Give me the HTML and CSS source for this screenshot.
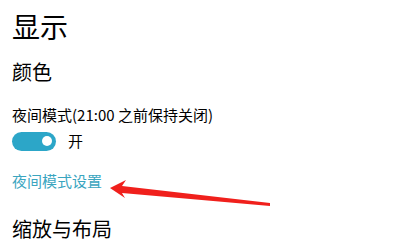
FILE: index.html
```html
<!DOCTYPE html>
<html lang="zh-CN">
<head>
    <meta charset="UTF-8">
    <title>显示</title>
    <link rel="stylesheet" href="styles.css">
</head>
<body>
    <div class="page">
        <h1 class="page-title">显示</h1>
        <h2 class="section-title">颜色</h2>

        <div class="setting">
            <div class="setting-label">夜间模式(21:00 之前保持关闭)</div>
            <div class="toggle-row">
                <span class="toggle"><span class="toggle-knob"></span></span>
                <span class="toggle-text">开</span>
            </div>
        </div>

        <a class="link" href="#">夜间模式设置</a>

        <h2 class="section-title section-next">缩放与布局</h2>

        <!-- red annotation arrow pointing at the link -->
        <svg class="arrow" width="170" height="36" viewBox="0 0 170 36">
            <polygon points="5,13 21,5 17,11 165,28 165,31 17,18 20,23" fill="#f0201c"/>
        </svg>
    </div>
</body>
</html>
```

FILE: styles.css
```css
body {
    margin: 0;
    background: #fff;
    font-family: "Noto Sans CJK SC", "Liberation Sans", sans-serif;
    color: #000;
}
.page {
    position: relative;
    padding: 6px 12px 0;
}
.page-title {
    margin: 0;
    font-size: 28px;
    font-weight: normal;
    line-height: 40px;
}
.section-title {
    margin: 12px 0 0;
    font-size: 20px;
    font-weight: normal;
    line-height: 28px;
}
.setting {
    margin-top: 18px;
}
.setting-label {
    font-size: 15px;
    line-height: 22px;
}
.toggle-row {
    display: flex;
    align-items: center;
    gap: 12px;
    margin-top: 4px;
}
.toggle {
    display: flex;
    align-items: center;
    justify-content: flex-end;
    width: 44px;
    height: 19px;
    box-sizing: border-box;
    padding-right: 4px;
    border-radius: 10px;
    background: #2ca6c8;
}
.toggle-knob {
    width: 10px;
    height: 10px;
    border-radius: 50%;
    background: #fff;
}
.toggle-text {
    font-size: 15px;
    line-height: 22px;
}
.link {
    display: block;
    margin-top: 18px;
    font-size: 15px;
    line-height: 22px;
    color: #3aa5bf;
    text-decoration: none;
}
.section-next {
    margin-top: 23px;
}
.arrow {
    position: absolute;
    left: 105px;
    top: 175px;
}
```
